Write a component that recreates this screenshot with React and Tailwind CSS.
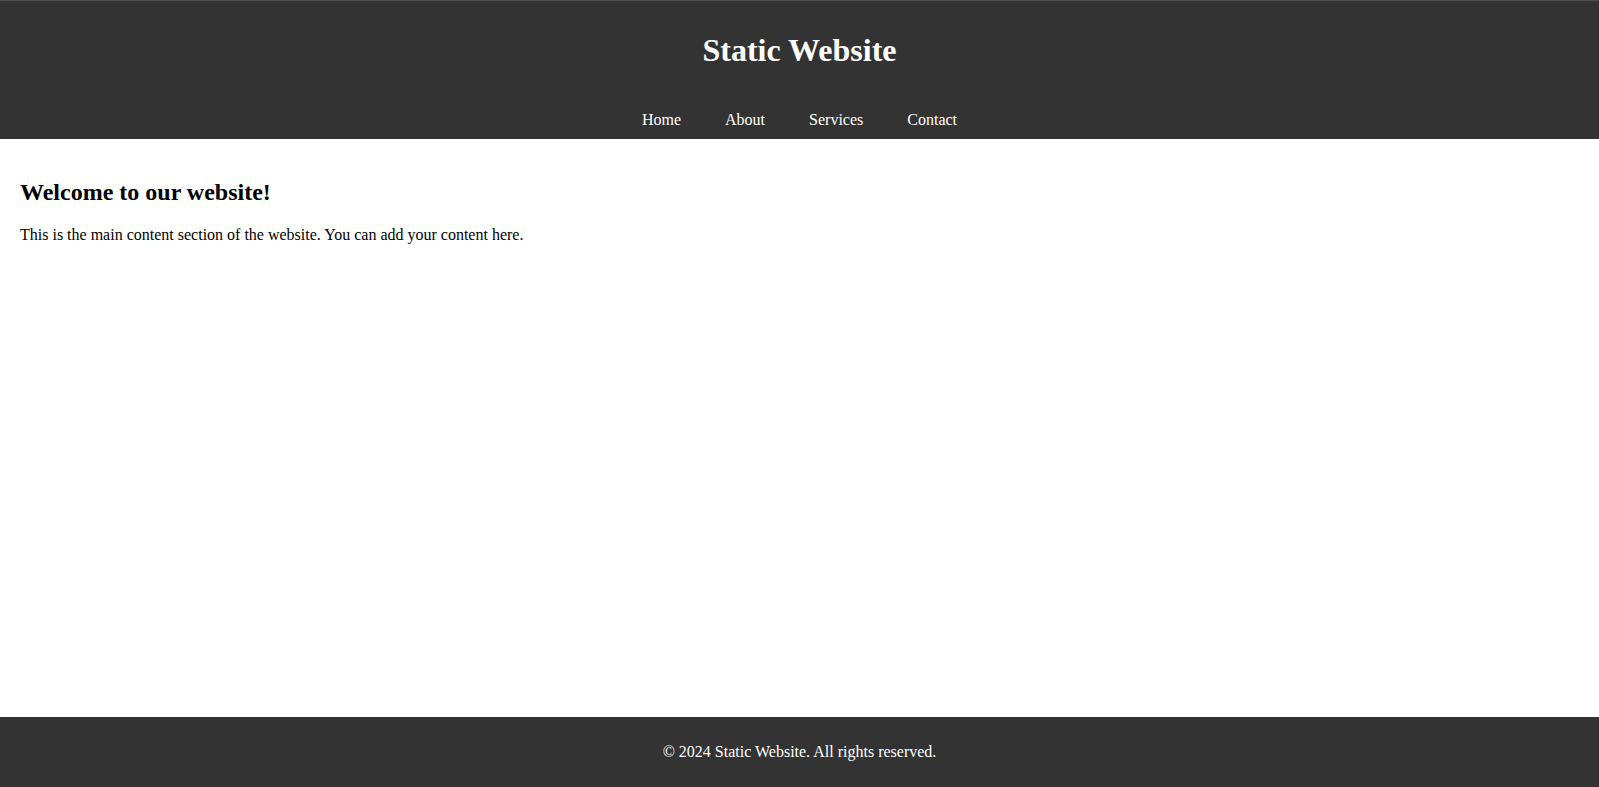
const navLinks = ["Home", "About", "Services", "Contact"];

const App = () => {
  return (
    <div className="min-h-screen flex flex-col bg-white text-black font-['Liberation_Serif',serif]">
      <header className="bg-[#333333] text-white border-t border-[#4f4f4f] text-center pb-[10px]">
        <h1 className="text-[32px] font-bold leading-[37px] pt-[31px]">Static Website</h1>
        <nav className="mt-[42px]">
          <ul className="flex justify-center gap-[44px] text-[16px] leading-[18px]">
            {navLinks.map((link) => (
              <li key={link}>
                <a href="#" className="text-white">
                  {link}
                </a>
              </li>
            ))}
          </ul>
        </nav>
      </header>

      <main className="flex-1 p-[20px]">
        <h2 className="text-[24px] font-bold leading-[28px] mt-[19px] mb-[20px]">Welcome to our website!</h2>
        <p className="text-[16px] leading-[18px]">
          This is the main content section of the website. You can add your content here.
        </p>
      </main>

      <footer className="bg-[#333333] text-white text-center text-[16px] leading-[18px] py-[26px]">
        <p>© 2024 Static Website. All rights reserved.</p>
      </footer>
    </div>
  );
};

export default App;
